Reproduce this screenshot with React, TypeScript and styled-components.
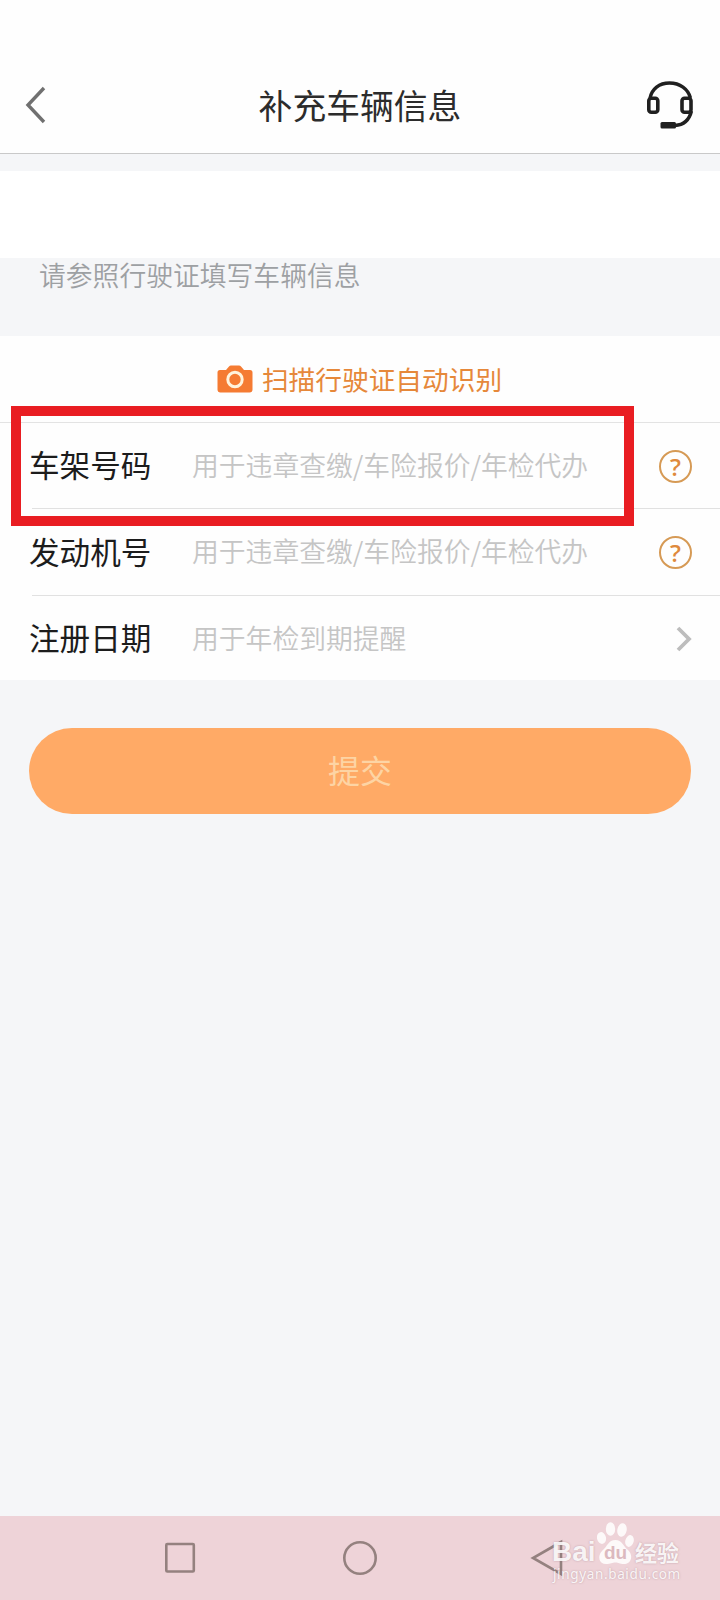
import React from 'react';
import styled, { createGlobalStyle } from 'styled-components';

const GlobalStyle = createGlobalStyle`
  * { box-sizing: border-box; }
  body {
    margin: 0;
    background: #f5f6f8;
    font-family: "Noto Sans CJK SC", "Liberation Sans", sans-serif;
  }
`;

const Screen = styled.main`
  display: flex;
  flex-direction: column;
  width: 720px;
  height: 1600px;
  overflow: hidden;
  background: #f5f6f8;
`;

const Header = styled.header`
  display: grid;
  grid-template-columns: 100px 1fr 100px;
  align-items: center;
  height: 154px;
  padding-top: 56px;
  border-bottom: 1px solid #c9c9c9;
  background: #fefefe;
`;

const HeaderButton = styled.button<{ $end?: boolean }>`
  display: flex;
  justify-content: ${(p) => (p.$end ? 'flex-end' : 'flex-start')};
  padding: ${(p) => (p.$end ? '0 26px 0 0' : '0 0 0 24px')};
  border: 0;
  background: none;
`;

const Title = styled.h1`
  margin: 0;
  color: #2c2c2c;
  font-size: 33.8px;
  font-weight: 400;
  line-height: 48px;
  text-align: center;
`;

const Banner = styled.div`
  flex: none;
  height: 87px;
  margin-top: 17px;
  background: #fff;
`;

const Hint = styled.p`
  flex: none;
  height: 78px;
  margin: 0;
  padding-left: 39px;
  color: #9da0a3;
  font-size: 26.8px;
  font-weight: 350;
  line-height: 34px;
`;

const Form = styled.section`
  position: relative;
  flex: none;
  height: 344px;
  background: #fefefe;
`;

const ScanLink = styled.button`
  display: flex;
  align-items: center;
  justify-content: center;
  gap: 9px;
  width: 100%;
  height: 87px;
  padding: 0 1px 0 0;
  border: 0;
  border-bottom: 1px solid #e3e3e3;
  background: none;
  color: #e6883a;
  font: 400 26.7px/36px "Noto Sans CJK SC", sans-serif;
`;

const Row = styled.div<{ $height: number; $last?: boolean }>`
  display: flex;
  align-items: center;
  height: ${(p) => p.$height}px;
  margin-left: 29px;
  padding-right: 28px;
  background: ${(p) =>
    p.$last ? 'none' : 'linear-gradient(#e1e1e1, #e1e1e1) 3px 100% / 100% 1px no-repeat'};
`;

const Label = styled.span`
  width: 163px;
  padding-bottom: 4px;
  color: #1c1c1c;
  font-size: 30.6px;
  line-height: 44px;
`;

const Placeholder = styled.span`
  flex: 1;
  padding-bottom: 3px;
  color: #c5c5c5;
  font-size: 26.8px;
  font-weight: 350;
  line-height: 38px;
  white-space: nowrap;
`;

const HelpBadge = styled.span`
  display: flex;
  align-items: center;
  justify-content: center;
  width: 33px;
  height: 33px;
  border: 2px solid #d69a55;
  border-radius: 50%;
  color: #df8a3c;
  font: 600 24px/29px "Open Sans", sans-serif;
`;

const Highlight = styled.div`
  position: absolute;
  top: 70px;
  left: 11px;
  width: 623px;
  height: 120px;
  border: 10px solid #e91d22;
`;

const Submit = styled.button`
  flex: none;
  height: 86px;
  margin: 48px 29px 0;
  padding: 0 0 4px;
  border: 0;
  border-radius: 43px;
  background: #ffaa66;
  color: #fdd4a4;
  font: 400 32px/46px "Noto Sans CJK SC", sans-serif;
`;

const NavBar = styled.nav`
  position: relative;
  display: flex;
  align-items: center;
  height: 84px;
  margin-top: auto;
  padding-left: 164px;
  background: #eed3d8;
  color: #94817f;
`;

const NavIcon = styled.svg<{ $gap?: number }>`
  flex: none;
  margin-left: ${(p) => p.$gap ?? 0}px;
  fill: none;
  stroke: currentColor;
  stroke-width: 2.6;
`;

const Watermark = styled.div`
  position: absolute;
  top: 5px;
  left: 552px;
  color: rgba(255, 255, 255, 0.88);
  text-shadow: 0 0 2px rgba(150, 110, 120, 0.55);
`;

const Brand = styled.div`
  display: flex;
  align-items: flex-end;
  height: 44px;
  font: 700 28px/30px "Liberation Sans", sans-serif;
`;

const BrandLatin = styled.span`
  width: 45px;
  margin-bottom: -2px;
`;

const BrandChinese = styled.span`
  margin: 0 0 1px 1px;
  font: 700 22px/26px "Noto Sans CJK SC", sans-serif;
`;

const Paw = styled.div`
  position: relative;
  width: 37px;
  height: 44px;
  svg { display: block; }
`;

const PawText = styled.span`
  position: absolute;
  right: 0;
  bottom: 2px;
  left: 0;
  color: #dcb9bf;
  font: 700 19px/20px "Liberation Sans", sans-serif;
  text-align: center;
  text-shadow: none;
`;

const SiteUrl = styled.div`
  padding-left: 1px;
  font: 400 13.6px/17px "Noto Sans", sans-serif;
  letter-spacing: 0.6px;
  white-space: nowrap;
`;

const fields = [
  { label: '车架号码', placeholder: '用于违章查缴/车险报价/年检代办', help: true, height: 86 },
  { label: '发动机号', placeholder: '用于违章查缴/车险报价/年检代办', help: true, height: 87 },
  { label: '注册日期', placeholder: '用于年检到期提醒', help: false, height: 86 },
];

const BackIcon = () => (
  <svg width="22" height="38" viewBox="0 0 22 38" fill="none" stroke="#707070" strokeWidth="3.4">
    <path d="M20 2 4 19 20 36" />
  </svg>
);

const HeadsetIcon = () => (
  <svg width="50" height="50" viewBox="0 0 50 50" fill="none" stroke="#202020" strokeWidth="3.6">
    <rect x="4.8" y="18.3" width="9" height="14" rx="2.5" />
    <rect x="38" y="18.3" width="9" height="14" rx="2.5" />
    <path d="M6 18C8 9 15 3 25.5 3S44 9 46.500 18M47.500 31C45.500 39 40 45 31 45.500" strokeWidth="3.4" />
    <rect x="16.500" y="42" width="15.500" height="6.500" rx="1.500" fill="#202020" stroke="none" />
  </svg>
);

const CameraIcon = () => (
  <svg width="36" height="28" viewBox="0 0 36 28">
    <path
      fill="#f57b32"
      d="M3 5H9L12 1.5Q12.7 .5 14 .5H22Q23.3 .5 24 1.5L27 5H33Q35.5 5 35.5 7.5V24.5Q35.5 27.5 32.5 27.5H3.5Q.5 27.5 .5 24.5V7.5Q.5 5 3 5Z"
    />
    <circle cx="18" cy="14.5" r="7.2" fill="none" stroke="#fff3dc" strokeWidth="3" />
  </svg>
);

const ChevronIcon = () => (
  <svg width="16" height="26" viewBox="0 0 16 26" fill="none" stroke="#bdbdbd" strokeWidth="3.8">
    <path d="M2 2 13 13 2 24" />
  </svg>
);

export default function App() {
  return (
    <>
      <GlobalStyle />
      <Screen>
        <Header>
          <HeaderButton aria-label="返回"><BackIcon /></HeaderButton>
          <Title>补充车辆信息</Title>
          <HeaderButton $end aria-label="客服"><HeadsetIcon /></HeaderButton>
        </Header>
        <Banner />
        <Hint>请参照行驶证填写车辆信息</Hint>
        <Form>
          <ScanLink><CameraIcon />扫描行驶证自动识别</ScanLink>
          {fields.map((field, i) => (
            <Row key={field.label} $height={field.height} $last={i === fields.length - 1}>
              <Label>{field.label}</Label>
              <Placeholder>{field.placeholder}</Placeholder>
              {field.help ? <HelpBadge>?</HelpBadge> : <ChevronIcon />}
            </Row>
          ))}
          <Highlight />
        </Form>
        <Submit>提交</Submit>
        <NavBar>
          <NavIcon width="32" height="32"><rect x="2.3" y="2" width="27.5" height="27.5" rx="1" /></NavIcon>
          <NavIcon $gap={146} width="36" height="36"><circle cx="18" cy="18" r="15.7" /></NavIcon>
          <NavIcon $gap={152} width="34" height="38"><path d="M31 3 3 19 31 35Z" /></NavIcon>
          <Watermark>
            <Brand>
              <BrandLatin>Bai</BrandLatin>
              <Paw>
                <svg width="37" height="44" viewBox="0 0 37 44" fill="#fff" fillOpacity=".85">
                  <ellipse cx="4.5" cy="17" rx="4.5" ry="6" transform="rotate(-12 4.5 17)" />
                  <ellipse cx="13.5" cy="8" rx="4.7" ry="6.8" />
                  <ellipse cx="25" cy="9" rx="4.7" ry="6.8" transform="rotate(10 25 9)" />
                  <ellipse cx="32.5" cy="20" rx="4.2" ry="6" transform="rotate(15 32.5 20)" />
                  <path d="M18.5 19C25 19 26 25 31 29C37 35 34 43 27 43C22 43 22 41.5 18.5 41.5S14 43 9 43C2 43 0 35 5 30C11 25 11 19 18.5 19Z" />
                </svg>
                <PawText>du</PawText>
              </Paw>
              <BrandChinese>经验</BrandChinese>
            </Brand>
            <SiteUrl>jingyan.baidu.com</SiteUrl>
          </Watermark>
        </NavBar>
      </Screen>
    </>
  );
}
